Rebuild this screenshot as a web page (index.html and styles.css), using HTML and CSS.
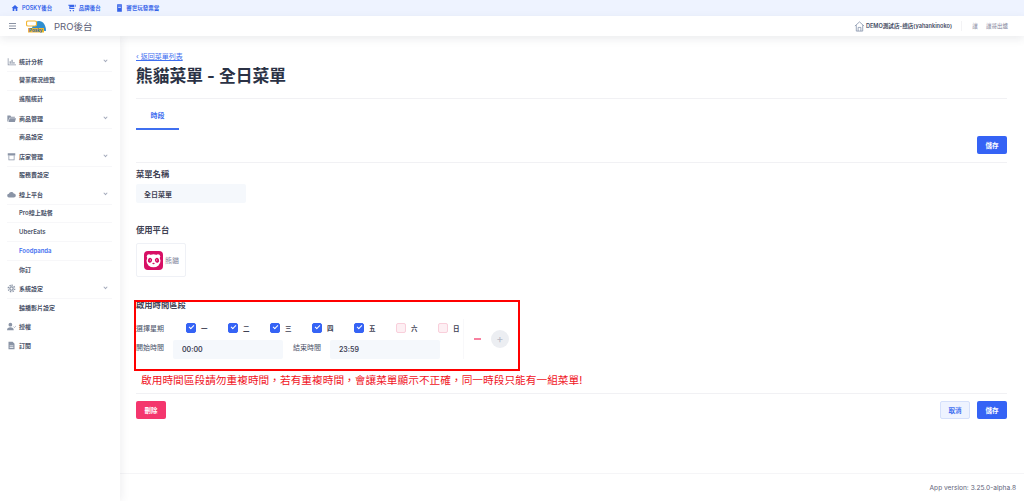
FILE: index.html
```html
<!DOCTYPE html>
<html lang="zh-Hant">
<head>
    <meta charset="UTF-8">
    <title>PRO後台</title>
    <link rel="stylesheet" href="styles.css">
</head>
<body>
    <div class="topbar">
        <a class="top-link"><svg width="8" height="8" viewBox="0 0 24 24"><path fill="#3563e9" d="M10 21v-7h4v7h5v-9h3L12 3 2 12h3v9z"/></svg>POSKY後台</a>
        <a class="top-link"><svg width="8" height="8" viewBox="0 0 24 24"><path fill="#3563e9" d="M1 2h18v8H7v2h12v3H4V5H1zM21 2h2v6h-2zM7 18a2 2 0 1 0 .01 0zM16 18a2 2 0 1 0 .01 0z"/></svg>品牌後台</a>
        <a class="top-link"><svg width="7" height="8" viewBox="0 0 20 24"><path fill="#3563e9" d="M3 1h14v22H3zM6 5v2h8V5zm0 4v2h8V9z" fill-rule="evenodd"/></svg>審世玩發票當</a>
    </div>

    <header class="header">
        <div class="header-left">
            <svg class="burger" width="7" height="6" viewBox="0 0 7 6"><path stroke="#8a92a3" stroke-width="1" d="M0 .5h7M0 3h7M0 5.500h7"/></svg>
            <svg class="logo" width="20" height="13" viewBox="0 0 20 13">
                <path fill="#2f8fd0" d="M6 10C6 4 9 1 13 1c4 0 7 4 7 10z"/>
                <rect x=".5" y="1" width="10" height="5" rx="1.500" fill="#fff" stroke="#f2b632" stroke-width="1.200"/>
                <path fill="#f2b632" d="M2 8h16v4.500H2z"/>
                <text x="3" y="12" font-size="4.500" font-weight="700" fill="#2f6fa8">Posky</text>
            </svg>
            <span class="brand">PRO後台</span>
        </div>
        <div class="header-right">
            <svg width="11" height="11" viewBox="0 0 24 24" fill="none" stroke="#7c8aa5" stroke-width="1.6"><path d="M2 11 12 2l10 9M5 9v13h14V9M9 22v-8h6v8"/></svg>
            <span class="store">DEMO測試店-總店(yahankinoko)</span>
            <span class="divider"></span>
            <span class="avatar">讓</span>
            <span class="user">讓哥出爐</span>
        </div>
    </header>

    <div class="layout">
        <aside class="sidebar">
            <div class="menu-group">
                <svg class="menu-icon" viewBox="0 0 24 24"><path fill="#8a94a6" d="M2 3h2v17h20v2H2zM7 11h3v7H7zM12 7h3v11h-3zM17 13h3v5h-3z"/></svg>
                <span>統計分析</span><i class="chev"></i>
            </div>
            <a class="menu-item">營業概況總覽</a>
            <a class="menu-item">進階統計</a>
            <div class="menu-group">
                <svg class="menu-icon" viewBox="0 0 24 24"><path fill="#8a94a6" d="M1 4h8l2 3h10v3H6l-3 10H1zM7 11h17l-3 10H4z"/></svg>
                <span>商品管理</span><i class="chev"></i>
            </div>
            <a class="menu-item">商品設定</a>
            <div class="menu-group">
                <svg class="menu-icon" viewBox="0 0 24 24"><path fill="#8a94a6" d="M2 3h20v6H2zM4 10h2v10h12V10h2v12H4z"/></svg>
                <span>店家管理</span><i class="chev"></i>
            </div>
            <a class="menu-item">服務費設定</a>
            <div class="menu-group">
                <svg class="menu-icon" viewBox="0 0 24 24"><path fill="#8a94a6" d="M6 20a5 5 0 0 1-1-10 7 7 0 0 1 13-1 5.500 5.500 0 0 1 0 11z"/></svg>
                <span>線上平台</span><i class="chev"></i>
            </div>
            <a class="menu-item">Pro線上點餐</a>
            <a class="menu-item">UberEats</a>
            <a class="menu-item active">Foodpanda</a>
            <a class="menu-item">你訂</a>
            <div class="menu-group">
                <svg class="menu-icon" viewBox="0 0 24 24" fill="none" stroke="#8a94a6" stroke-width="3"><circle cx="12" cy="12" r="4.500"/><path stroke-dasharray="3.500 3" stroke-width="4" d="M12 3.500a8.500 8.500 0 1 1-.01 0z"/></svg>
                <span>系統設定</span><i class="chev"></i>
            </div>
            <a class="menu-item">輪播影片設定</a>
            <div class="menu-group">
                <svg class="menu-icon" viewBox="0 0 24 24"><circle cx="9" cy="7" r="5" fill="#8a94a6"/><path fill="#8a94a6" d="M0 22c0-6 4-8 9-8s9 2 9 8z"/><path fill="none" stroke="#8a94a6" stroke-width="1.500" d="m17 12 3 3 4-5"/></svg>
                <span>授權</span>
            </div>
            <div class="menu-group">
                <svg class="menu-icon" viewBox="0 0 24 24"><path fill="#8a94a6" fill-rule="evenodd" d="M4 2h11l5 5v15H4zM7 12v2h10v-2zm0 4v2h10v-2z"/></svg>
                <span>訂閱</span>
            </div>
        </aside>

        <main class="main">
            <div class="content">
                <a class="back-link">‹ 返回菜單列表</a>
                <h1>熊貓菜單 - 全日菜單</h1>

                <div class="tabs"><a class="tab">時段</a></div>

                <div class="save-row">
                    <button class="btn btn-primary">儲存</button>
                </div>

                <div class="field name-field">
                    <h3>菜單名稱</h3>
                    <div class="input name-input">全日菜單</div>
                </div>

                <div class="field platform-field">
                    <h3>使用平台</h3>
                    <div class="platform-card">
                        <svg width="19" height="19" viewBox="0 0 19 19">
                            <rect width="19" height="19" rx="4" fill="#d70f64"/>
                            <circle cx="5" cy="5.500" r="2.200" fill="#fff"/>
                            <circle cx="14" cy="5.500" r="2.200" fill="#fff"/>
                            <ellipse cx="9.500" cy="9.800" rx="7" ry="6.500" fill="#fff"/>
                            <ellipse cx="6" cy="9.300" rx="2.100" ry="2.500" fill="#d70f64" transform="rotate(20 6 9.300)"/>
                            <ellipse cx="13" cy="9.300" rx="2.100" ry="2.500" fill="#d70f64" transform="rotate(-20 13 9.300)"/>
                            <circle cx="6.300" cy="9" r=".6" fill="#fff"/>
                            <circle cx="12.700" cy="9" r=".6" fill="#fff"/>
                            <ellipse cx="9.500" cy="12.500" rx="1.200" ry=".8" fill="#d70f64"/>
                        </svg>
                        <span>熊貓</span>
                    </div>
                </div>

                <section class="time-section">
                    <div class="annotation-box"></div>
                    <h3>啟用時間區段</h3>
                    <div class="time-body">
                        <div class="time-rows">
                            <div class="time-row days-row">
                                <label class="row-label">選擇星期</label>
                                <div class="days">
                                    <span class="day"><i class="check on"></i>一</span>
                                    <span class="day"><i class="check on"></i>二</span>
                                    <span class="day"><i class="check on"></i>三</span>
                                    <span class="day"><i class="check on"></i>四</span>
                                    <span class="day"><i class="check on"></i>五</span>
                                    <span class="day"><i class="check"></i>六</span>
                                    <span class="day"><i class="check"></i>日</span>
                                </div>
                            </div>
                            <div class="time-row">
                                <label class="row-label time-label">開始時間</label>
                                <div class="input time-input">00:00</div>
                                <label class="row-label time-label end-label">結束時間</label>
                                <div class="input time-input">23:59</div>
                            </div>
                        </div>
                        <div class="time-actions">
                            <span class="minus"></span>
                            <span class="plus">+</span>
                        </div>
                    </div>
                    <p class="warning">啟用時間區段請勿重複時間，若有重複時間，會讓菜單顯示不正確，同一時段只能有一組菜單!</p>
                </section>

                <div class="form-footer">
                    <button class="btn btn-danger">刪除</button>
                    <div class="footer-right">
                        <button class="btn btn-light">取消</button>
                        <button class="btn btn-primary">儲存</button>
                    </div>
                </div>
            </div>
            <footer class="app-footer">App version: 3.25.0-alpha.8</footer>
        </main>
    </div>
</body>
</html>
```

FILE: styles.css
```css
* {
    margin: 0;
    padding: 0;
    box-sizing: border-box;
    font-family: Inter, "Noto Sans CJK TC", sans-serif;
}
html, body {
    height: 501px;
    overflow: hidden;
}
body {
    background-color: #fff;
    color: #3f4254;
    display: flex;
    flex-direction: column;
}
.topbar {
    height: 16px;
    background-color: #eef3ff;
    display: flex;
    align-items: center;
    padding-left: 11px;
    gap: 15.500px;
}
.top-link {
    display: flex;
    align-items: center;
    gap: 3px;
    font-size: 5.5px;
    font-weight: 600;
    color: #3563e9;
}
.header {
    height: 20px;
    background-color: #fff;
    display: flex;
    justify-content: space-between;
    align-items: center;
    padding: 0 16px 0 9px;
    box-shadow: 0 3px 8px rgba(60, 70, 90, 0.1);
    position: relative;
    z-index: 2;
}
.header-left {
    display: flex;
    align-items: center;
}
.burger {
    margin-right: 10px;
}
.logo {
    margin-right: 8px;
}
.brand {
    font-size: 9.5px;
    color: #5e6278;
}
.header-right {
    display: flex;
    align-items: center;
    font-size: 5.5px;
    color: #7e8299;
}
.store {
    margin-left: 1px;
    font-weight: 600;
    color: #3f4a63;
    font-size: 5.6px;
}
.divider {
    width: 1px;
    height: 10px;
    background-color: #f3f3f5;
    margin: 0 8px 0 9px;
}
.avatar {
    width: 10px;
    text-align: center;
    margin-right: 6px;
}
.layout {
    flex: 1;
    display: flex;
    min-height: 0;
}
.sidebar {
    width: 120px;
    flex: none;
    padding: 16px 8px 0 7px;
    box-shadow: 2px 0 8px rgba(60, 70, 90, 0.08);
    position: relative;
    z-index: 1;
}
.menu-group {
    height: 19px;
    display: flex;
    align-items: center;
    font-size: 6px;
    font-weight: 600;
    color: #4a5268;
}
.menu-icon {
    width: 9px;
    height: 9px;
    margin-right: 3px;
    flex: none;
}
.chev {
    margin-left: auto;
    margin-right: 5px;
    width: 3px;
    height: 3px;
    border-right: 1px solid #a3aabb;
    border-bottom: 1px solid #a3aabb;
    transform: rotate(45deg) translate(-1px, -1px);
}
.menu-item {
    display: flex;
    align-items: center;
    height: 18.900px;
    padding-left: 12px;
    padding-bottom: 2px;
    font-size: 6px;
    font-weight: 600;
    color: #4a5268;
    border-top: 1px solid #f7f7f9;
}
.menu-item.active {
    color: #3f6ff0;
}
.main {
    flex: 1;
    display: flex;
    flex-direction: column;
    min-width: 0;
}
.content {
    flex: 1;
    padding: 16px 17px 0 16px;
}
.back-link {
    display: block;
    font-size: 7px;
    line-height: 9px;
    color: #3f6ff0;
    text-decoration: underline;
}
h1 {
    font-size: 16.800px;
    line-height: 23px;
    font-weight: 700;
    color: #2b3245;
    margin-top: 4px;
    padding-bottom: 10px;
    border-bottom: 1px solid #f1f1f4;
}
.tabs {
    height: 31px;
    padding-top: 2px;
    margin-bottom: 1px;
}
.tab {
    display: flex;
    align-items: center;
    justify-content: center;
    width: 43px;
    height: 29px;
    font-size: 7px;
    font-weight: 600;
    color: #3f6ff0;
    border-bottom: 2px solid #3f6ff0;
}
.save-row {
    display: flex;
    justify-content: flex-end;
    padding: 5px 0 8px;
    border-bottom: 1px solid #f1f1f4;
}
.btn {
    width: 30px;
    height: 18px;
    border: none;
    border-radius: 2px;
    font-size: 6.500px;
    font-weight: 600;
}
.btn-primary {
    background-color: #3563f5;
    color: #fff;
}
.btn-danger {
    background-color: #f4366d;
    color: #fff;
}
.btn-light {
    background-color: #eef3ff;
    border: 1px solid #d5e0fb;
    color: #3f6ff0;
}
h3 {
    font-size: 8.300px;
    line-height: 11px;
    font-weight: 600;
    color: #3f4254;
}
.field h3 {
    margin-bottom: 4px;
}
.name-field {
    margin-top: 6px;
}
.input {
    background-color: #f5f8fc;
    border-radius: 2px;
    display: flex;
    align-items: center;
    font-size: 7px;
    font-weight: 600;
    color: #3f4254;
}
.name-input {
    width: 110px;
    height: 19px;
    padding-left: 8px;
}
.platform-field {
    margin-top: 22px;
}
.platform-field h3 {
    margin-bottom: 7px;
}
.platform-card {
    width: 50px;
    height: 34px;
    border: 1px solid #eff1f6;
    border-radius: 2px;
    display: flex;
    align-items: center;
    padding-left: 7px;
    gap: 2px;
    font-size: 7px;
    color: #7e8299;
}
.time-section {
    position: relative;
    margin-top: 24px;
}
.annotation-box {
    position: absolute;
    left: -2px;
    top: -1px;
    width: 386px;
    height: 71px;
    border: 2px solid #f00;
}
.time-section h3 {
    line-height: 9px;
    margin-bottom: 9px;
}
.time-body {
    display: flex;
}
.time-rows {
    width: 328px;
    border-right: 1px solid #f8f8fa;
}
.time-row {
    display: flex;
    align-items: center;
}
.days-row {
    height: 17px;
    margin-bottom: 4px;
}
.row-label {
    font-size: 7px;
    color: #4a5268;
    width: 37px;
    flex: none;
}
.time-label {
    padding-bottom: 5px;
}
.end-label {
    margin-left: 10px;
}
.days {
    display: flex;
    margin-left: 13px;
}
.day {
    width: 42px;
    display: flex;
    align-items: center;
    font-size: 6.500px;
    font-weight: 600;
    color: #3f4254;
}
.check {
    width: 10px;
    height: 10px;
    border-radius: 2px;
    margin-right: 5px;
    background-color: #fdeff3;
    border: 1px solid #f9cfdb;
    position: relative;
}
.check.on {
    background-color: #3563f5;
    border-color: #3563f5;
}
.check.on::after {
    content: "";
    position: absolute;
    left: 2px;
    top: 1px;
    width: 4px;
    height: 2px;
    border-left: 1px solid #fff;
    border-bottom: 1px solid #fff;
    transform: rotate(-45deg);
}
.time-input {
    width: 110px;
    height: 19px;
    padding-left: 9px;
}
.time-actions {
    display: flex;
    align-items: center;
    padding-left: 10px;
    gap: 10px;
}
.minus {
    width: 7px;
    height: 2px;
    background-color: #f8809f;
}
.plus {
    width: 18px;
    height: 18px;
    border-radius: 50%;
    background-color: #eceef2;
    color: #b5b9c6;
    font-size: 11px;
    display: flex;
    align-items: center;
    justify-content: center;
}
.warning {
    font-size: 10.700px;
    line-height: 14px;
    color: #f0141e;
    margin: 15px 0 0 5px;
}
.form-footer {
    display: flex;
    justify-content: space-between;
    border-top: 1px solid #f1f1f4;
    margin-top: 5px;
    padding-top: 7px;
}
.footer-right {
    display: flex;
    gap: 7px;
}
.app-footer {
    height: 28px;
    border-top: 1px solid #f5f5f7;
    text-align: right;
    font-size: 6.600px;
    line-height: 28px;
    padding-right: 8px;
    color: #5e6278;
}
```
